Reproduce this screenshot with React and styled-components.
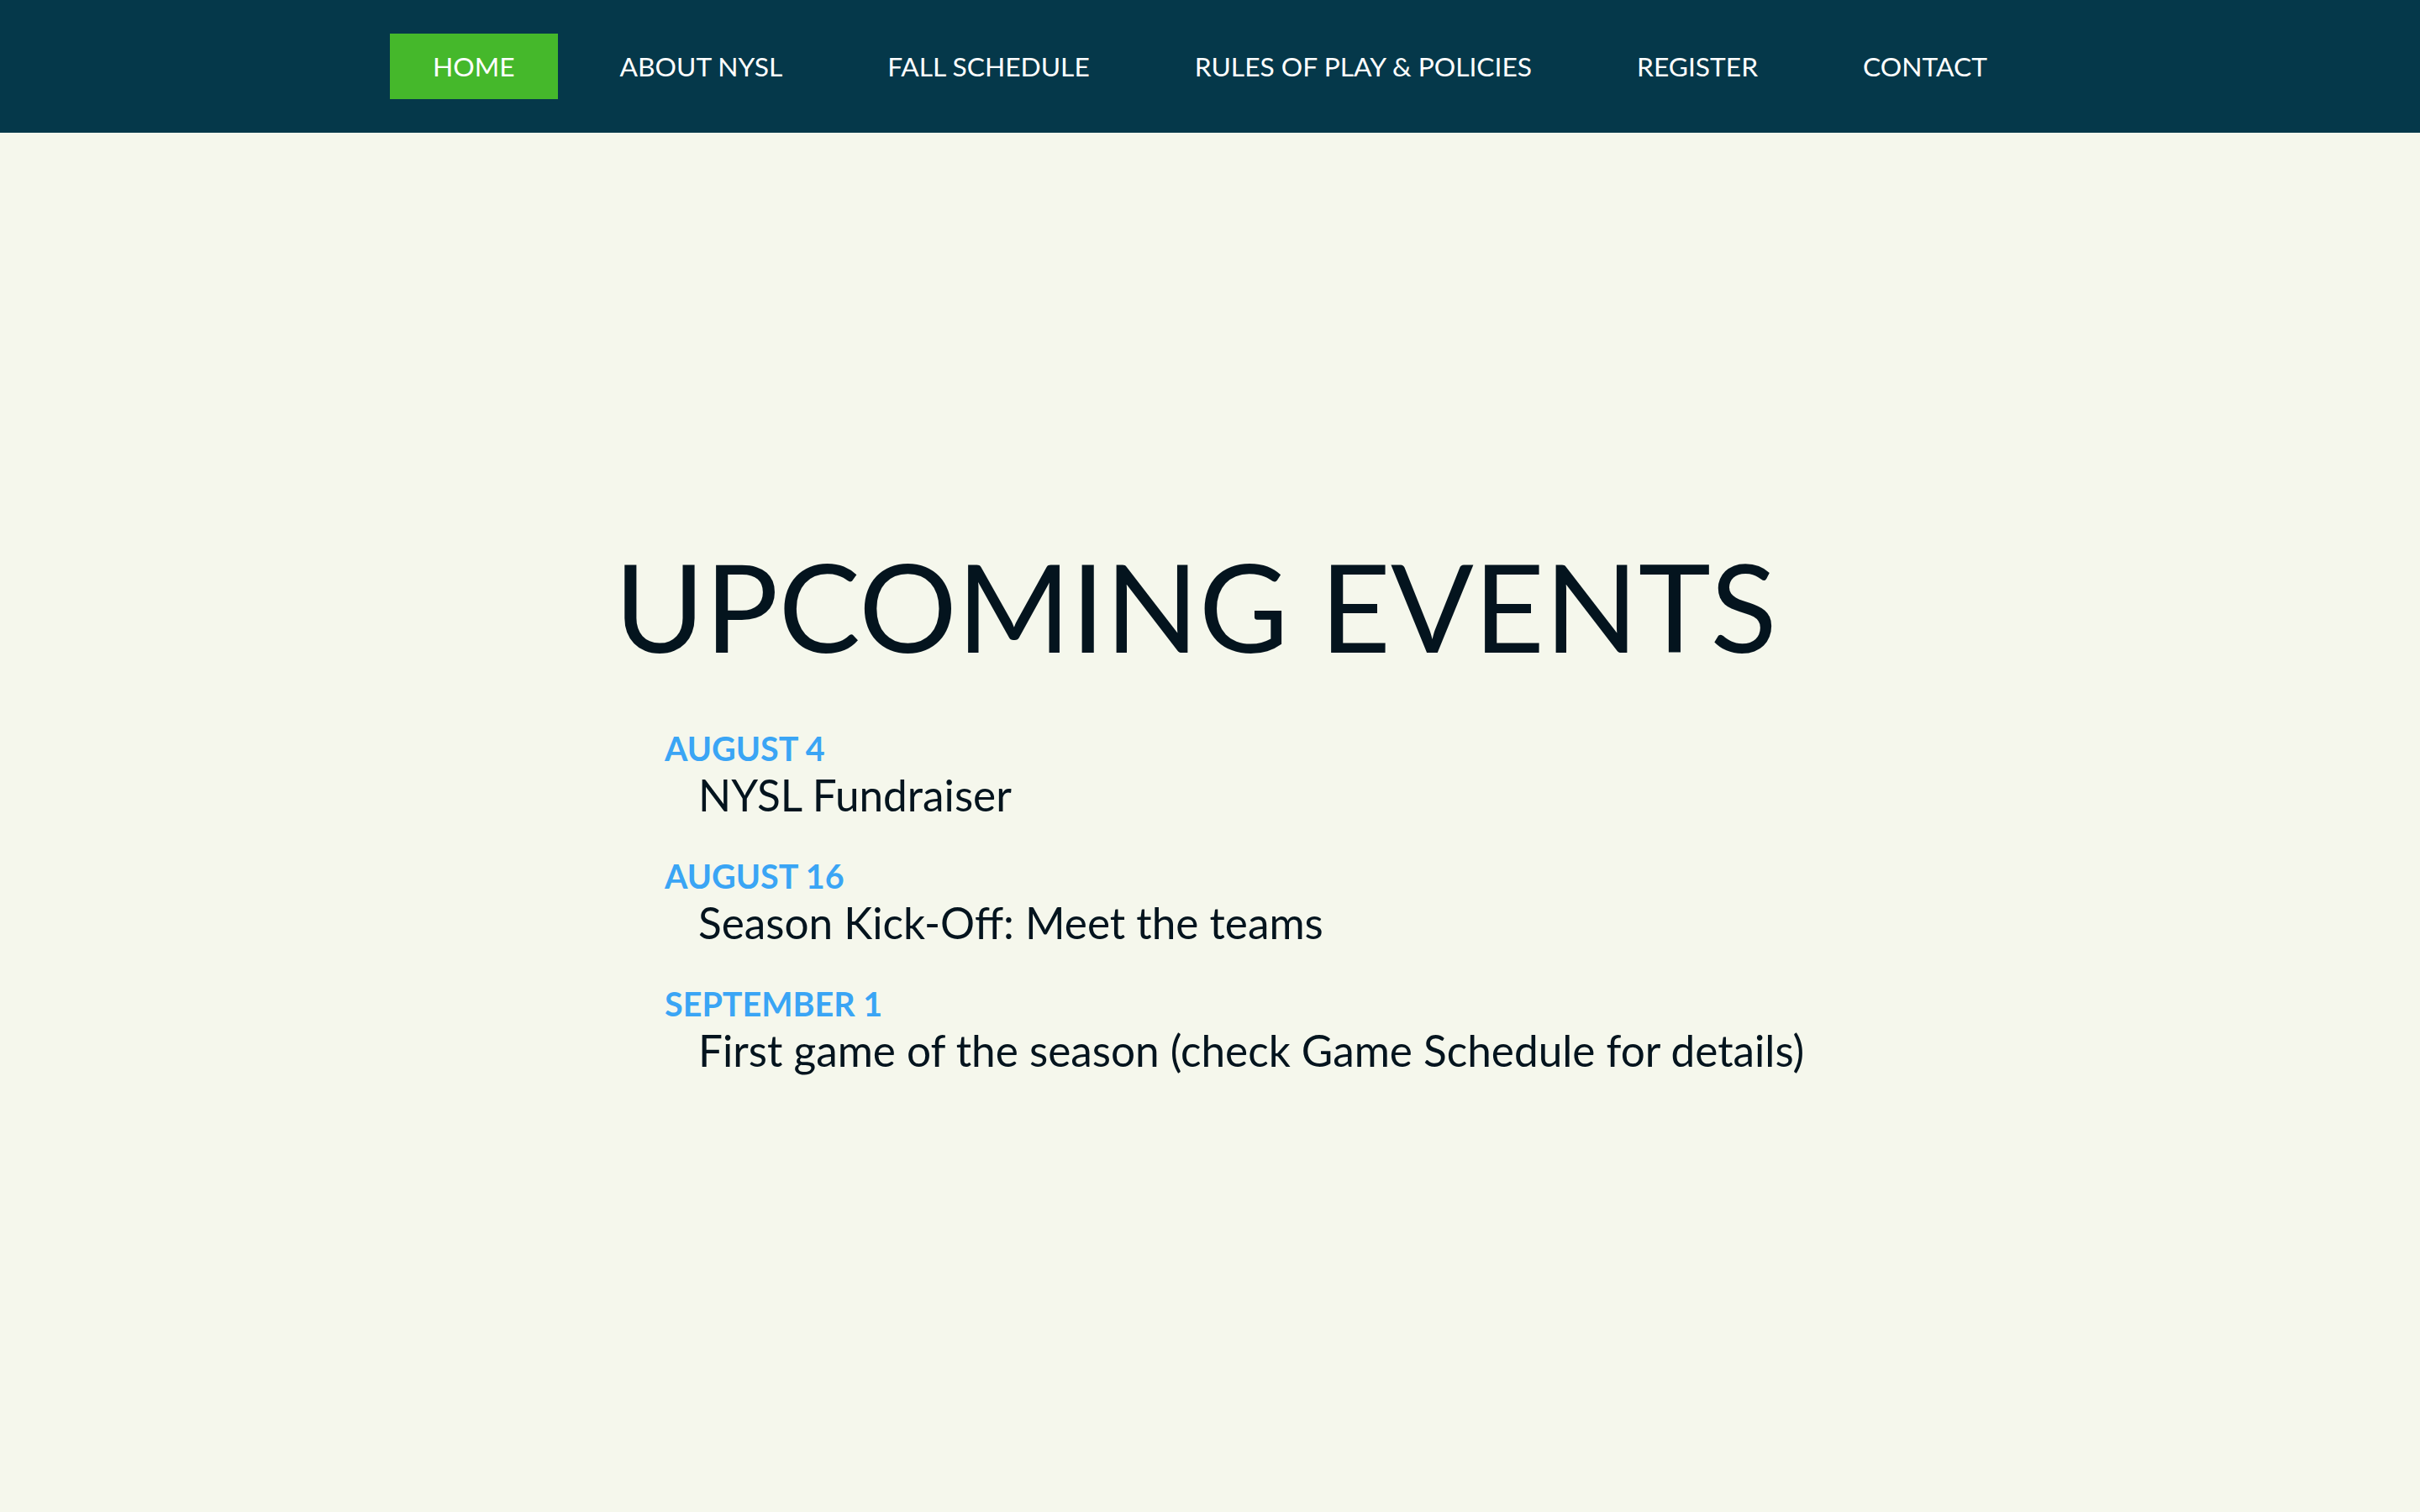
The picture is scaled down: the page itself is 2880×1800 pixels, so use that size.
import styled, { createGlobalStyle } from "styled-components";

const GlobalStyle = createGlobalStyle`
  html, body {
    margin: 0;
    padding: 0;
    background-color: #f5f7ec;
    font-family: Lato, "Open Sans", sans-serif;
  }
  #root {
    min-height: 100vh;
  }
`;

const NAV_LINKS = [
  "HOME",
  "ABOUT NYSL",
  "FALL SCHEDULE",
  "RULES OF PLAY & POLICIES",
  "REGISTER",
  "CONTACT",
];

const EVENTS = [
  { date: "AUGUST 4", title: "NYSL Fundraiser" },
  { date: "AUGUST 16", title: "Season Kick-Off: Meet the teams" },
  { date: "SEPTEMBER 1", title: "First game of the season (check Game Schedule for details)" },
];

function App() {
  return (
    <>
      <GlobalStyle />
      <NavBar>
        <NavList>
          {NAV_LINKS.map((link, i) => (
            <NavItem key={link} $active={i === 0}>
              {link}
            </NavItem>
          ))}
        </NavList>
      </NavBar>
      <Main>
        <Heading>UPCOMING EVENTS</Heading>
        <EventList>
          {EVENTS.map((event) => (
            <EventItem key={event.date}>
              <EventDate>{event.date}</EventDate>
              <EventTitle>{event.title}</EventTitle>
            </EventItem>
          ))}
        </EventList>
      </Main>
    </>
  );
}

export default App;

const NavBar = styled.nav`
  background-color: #05384a;
  height: 158px;
  display: flex;
  align-items: center;
  justify-content: center;
`;

const NavList = styled.ul`
  display: flex;
  align-items: center;
  gap: 23px;
  margin: 0;
  padding: 0;
  list-style: none;
`;

const NavItem = styled.li`
  display: flex;
  align-items: center;
  height: 78px;
  padding: 0 51px;
  font-size: 31.75px;
  color: #ffffff;
  background-color: ${(props) => (props.$active ? "#45b82b" : "transparent")};
  white-space: nowrap;
`;

const Main = styled.main`
  display: flex;
  flex-direction: column;
  align-items: center;
  padding-top: 475px;
`;

const Heading = styled.h1`
  margin: 0;
  padding-right: 34px;
  font-size: 146px;
  font-weight: 400;
  line-height: 1.2;
  color: #04141e;
`;

const EventList = styled.ul`
  display: flex;
  flex-direction: column;
  gap: 42px;
  margin: 59px 0 0 791px;
  padding: 0;
  list-style: none;
  align-self: flex-start;
`;

const EventItem = styled.li`
  display: flex;
  flex-direction: column;
`;

const EventDate = styled.span`
  font-size: 39.5px;
  font-weight: 700;
  line-height: 48px;
  color: #3aa5f5;
`;

const EventTitle = styled.span`
  font-size: 51.3px;
  line-height: 62px;
  padding-left: 40px;
  color: #04141e;
`;
